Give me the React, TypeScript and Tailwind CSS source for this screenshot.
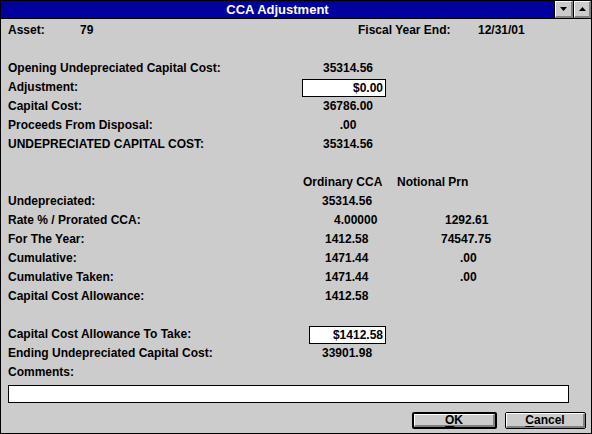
import React from "react";

function Row({ children }: { children: React.ReactNode }) {
  return <div className="flex h-[19px] items-center leading-[19px] whitespace-nowrap">{children}</div>;
}

function Label({ children }: { children?: React.ReactNode }) {
  return <div className="w-[294px] shrink-0">{children}</div>;
}

function TitleButton({ up, narrow }: { up?: boolean; narrow?: boolean }) {
  return (
    <div className={`${narrow ? "w-[18px]" : "w-[19px]"} h-full border-l border-black bg-[#cccccc] flex`}>
      <div className="flex-1 border-t border-l border-white border-r-2 border-b-2 border-r-[#808080] border-b-[#808080] flex items-center justify-center">
        <svg width="7" height="4" viewBox="0 0 7 4">
          {up ? <polygon points="3.5,0 7,4 0,4" fill="#000" /> : <polygon points="0,0 7,0 3.5,4" fill="#000" />}
        </svg>
      </div>
    </div>
  );
}

function Btn({ w, def, children }: { w: string; def?: boolean; children: React.ReactNode }) {
  return (
    <div className={`${w} h-[17px] ${def ? "border-2" : "border"} border-black rounded-[2px] bg-[#cccccc] flex`}>
      <div className="flex-1 border-t border-l border-white border-r-2 border-b-2 border-r-[#808080] border-b-[#808080] flex items-center justify-center leading-none">
        {children}
      </div>
    </div>
  );
}

export default function App() {
  return (
    <div className="w-[592px] h-[434px] bg-[#cccccc] border border-black flex flex-col font-['Liberation_Sans',Arial,sans-serif] font-bold text-[12px] text-black overflow-hidden">
      {/* Title bar */}
      <div className="h-[18px] flex border-b border-black shrink-0">
        <div className="flex-1 bg-[#00009c] text-white text-[13px] flex items-center justify-center leading-none">
          CCA Adjustment
        </div>
        <TitleButton />
        <TitleButton up narrow />
      </div>

      <div className="flex flex-col pl-[7px] pt-[2px]">
        <Row>
          <div className="w-[72px]">Asset:</div>
          <div className="w-[278px]">79</div>
          <div className="w-[120px]">Fiscal Year End:</div>
          <div>12/31/01</div>
        </Row>
        <Row />
        <Row>
          <Label>Opening Undepreciated Capital Cost:</Label>
          <div className="w-[92px] text-center">35314.56</div>
        </Row>
        <Row>
          <Label>Adjustment:</Label>
          <div className="w-[84px] h-[18px] bg-white border border-black flex items-center justify-end pr-[2px] leading-none">$0.00</div>
        </Row>
        <Row>
          <Label>Capital Cost:</Label>
          <div className="w-[92px] text-center">36786.00</div>
        </Row>
        <Row>
          <Label>Proceeds From Disposal:</Label>
          <div className="w-[92px] text-center">.00</div>
        </Row>
        <Row>
          <Label>UNDEPRECIATED CAPITAL COST:</Label>
          <div className="w-[92px] text-center">35314.56</div>
        </Row>
        <Row />
        <Row>
          <Label />
          <div className="w-[92px] pl-[1px]">Ordinary CCA</div>
          <div className="pl-[3px]">Notional Prn</div>
        </Row>
        <Row>
          <Label>Undepreciated:</Label>
          <div className="w-[92px] pl-[20px]">35314.56</div>
        </Row>
        <Row>
          <Label>Rate % / Prorated CCA:</Label>
          <div className="w-[92px] pl-[32px]">4.00000</div>
          <div className="pl-[51px]">1292.61</div>
        </Row>
        <Row>
          <Label>For The Year:</Label>
          <div className="w-[92px] pl-[23px]">1412.58</div>
          <div className="pl-[47px]">74547.75</div>
        </Row>
        <Row>
          <Label>Cumulative:</Label>
          <div className="w-[92px] pl-[23px]">1471.44</div>
          <div className="pl-[66px]">.00</div>
        </Row>
        <Row>
          <Label>Cumulative Taken:</Label>
          <div className="w-[92px] pl-[23px]">1471.44</div>
          <div className="pl-[66px]">.00</div>
        </Row>
        <Row>
          <Label>Capital Cost Allowance:</Label>
          <div className="w-[92px] pl-[23px]">1412.58</div>
        </Row>
        <Row />
        <Row>
          <Label>Capital Cost Allowance To Take:</Label>
          <div className="ml-[7px] w-[77px] h-[18px] bg-white border border-black flex items-center justify-end pr-[2px] leading-none">$1412.58</div>
        </Row>
        <Row>
          <Label>Ending Undepreciated Capital Cost:</Label>
          <div className="w-[92px] pl-[20px]">33901.98</div>
        </Row>
        <Row>
          <Label>Comments:</Label>
        </Row>
        <div className="mt-[3px] w-[561px] h-[18px] bg-white border border-black" />
        <div className="mt-[9px] flex justify-end gap-[8px] pr-[5px]">
          <Btn w="w-[85px]" def>
            <span><span className="underline underline-offset-2">O</span>K</span>
          </Btn>
          <Btn w="w-[81px]">
            <span><span className="underline underline-offset-2">C</span>ancel</span>
          </Btn>
        </div>
      </div>
    </div>
  );
}
